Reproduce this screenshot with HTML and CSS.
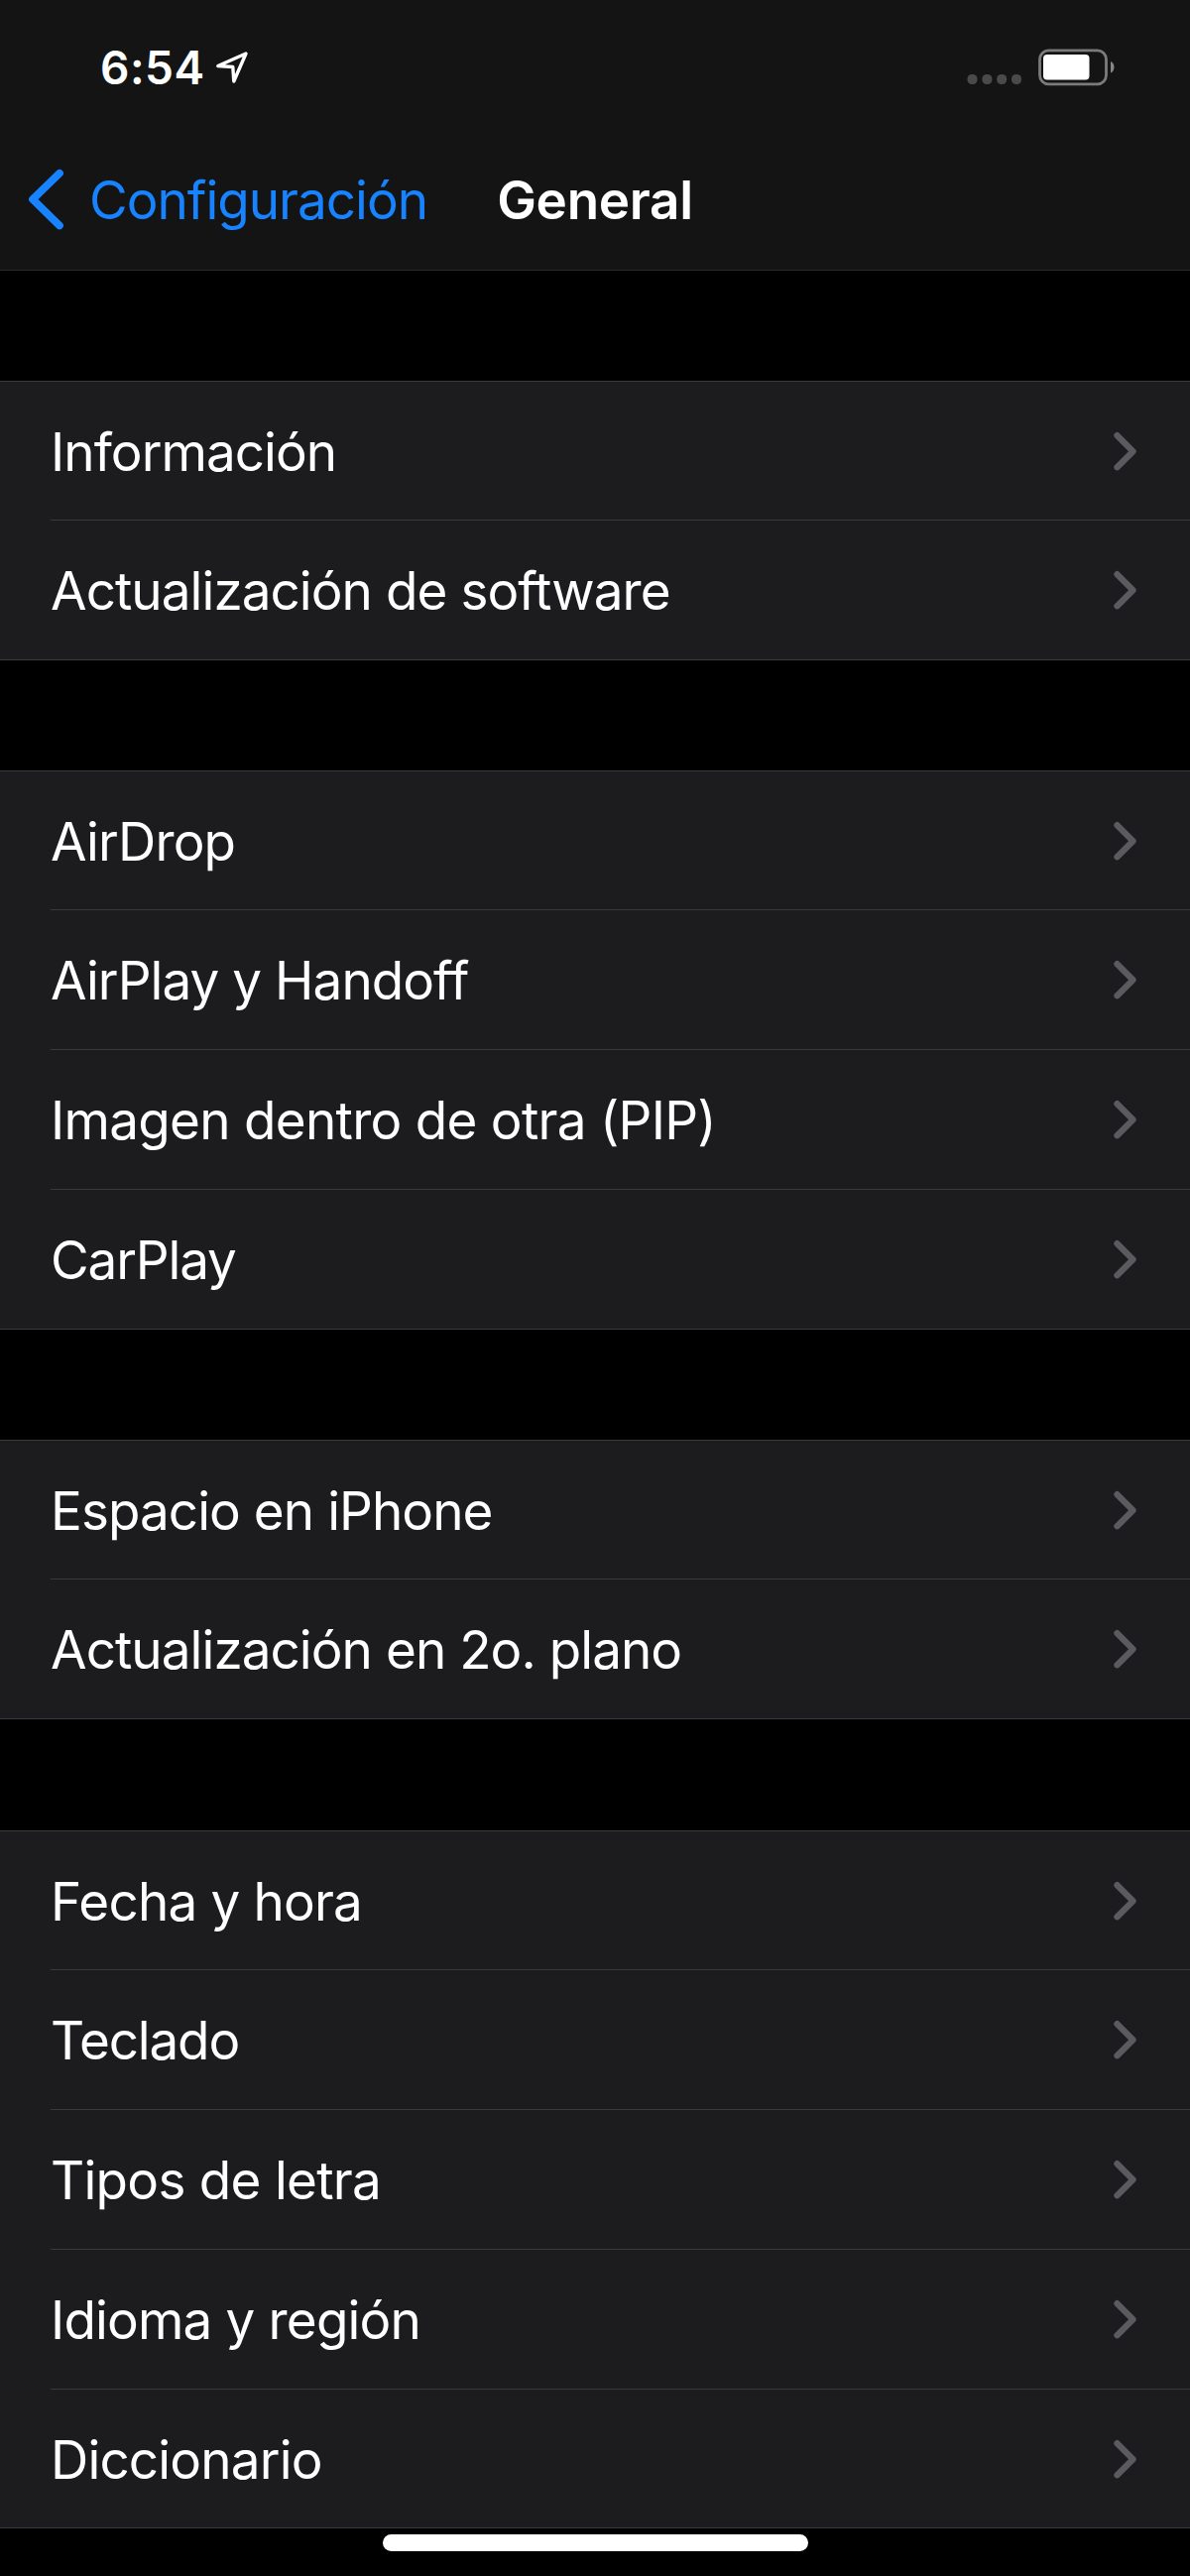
FILE: index.html
```
<!DOCTYPE html>
<html lang="es">
<head>
<meta charset="utf-8">
<title>General</title>
<link rel="stylesheet" href="styles.css">
</head>
<body>
<svg class="defs" aria-hidden="true"><symbol id="chevron" viewBox="0 0 24 40"><path d="M3.500 4.200 19.500 20.200 3.500 36.200"/></symbol></svg>
<header class="top">
  <div class="status">
    <span class="time">6:54</span>
    <svg class="location" viewBox="0 0 34 34"><path d="M31 3 2.8 15.5 17.8 16.5 18.8 31Z"/></svg>
    <svg class="signal" viewBox="0 0 56 12"><rect x="0.5" y="1" width="10" height="10" rx="4.5"/><rect x="15.4" y="1" width="10" height="10" rx="4.5"/><rect x="30.2" y="1" width="10" height="10" rx="4.5"/><rect x="45" y="1" width="10" height="10" rx="4.5"/></svg>
    <svg class="battery" viewBox="0 0 78 38"><rect class="shell" x="2.5" y="1.8" width="67" height="34" rx="9"/><rect class="charge" x="6" y="6" width="46.5" height="25.500" rx="4"/><path class="nub" d="M74 13C76 13.5 77.500 16 77.500 18.700S76 24 74 24.500Z"/></svg>
  </div>
  <nav class="nav">
    <a class="back"><svg class="back-icon" viewBox="0 0 36 62"><path d="M31 4.800 4 31 31 57.500"/></svg><span class="back-label">Configuración</span></a>
    <h1 class="title">General</h1>
  </nav>
</header>
<main>
  <ul class="group">
    <li class="row tight"><span>Información</span><svg class="chevron"><use href="#chevron"/></svg></li>
    <li class="row tight"><span>Actualización de software</span><svg class="chevron"><use href="#chevron"/></svg></li>
  </ul>
  <ul class="group">
    <li class="row"><span>AirDrop</span><svg class="chevron"><use href="#chevron"/></svg></li>
    <li class="row tight"><span>AirPlay y Handoff</span><svg class="chevron"><use href="#chevron"/></svg></li>
    <li class="row loose"><span>Imagen dentro de otra (PIP)</span><svg class="chevron"><use href="#chevron"/></svg></li>
    <li class="row tighter"><span>CarPlay</span><svg class="chevron"><use href="#chevron"/></svg></li>
  </ul>
  <ul class="group">
    <li class="row tight"><span>Espacio en iPhone</span><svg class="chevron"><use href="#chevron"/></svg></li>
    <li class="row tight"><span>Actualización en 2o. plano</span><svg class="chevron"><use href="#chevron"/></svg></li>
  </ul>
  <ul class="group last">
    <li class="row"><span>Fecha y hora</span><svg class="chevron"><use href="#chevron"/></svg></li>
    <li class="row tighter"><span>Teclado</span><svg class="chevron"><use href="#chevron"/></svg></li>
    <li class="row loose"><span>Tipos de letra</span><svg class="chevron"><use href="#chevron"/></svg></li>
    <li class="row"><span>Idioma y región</span><svg class="chevron"><use href="#chevron"/></svg></li>
    <li class="row"><span>Diccionario</span><svg class="chevron"><use href="#chevron"/></svg></li>
  </ul>
</main>
<div class="home"></div>
</body>
</html>
```
FILE: styles.css
```
* { box-sizing: border-box; }
body {
  margin: 0;
  background: #000;
  color: #fff;
  font-family: Inter, "Liberation Sans", sans-serif;
  font-size: 53px;
  font-variant-ligatures: none;
  min-height: 2598px;
}
svg { display: block; flex: none; }
.defs { width: 0; height: 0; position: absolute; }
.top {
  height: 273px;
  background: #141414;
  border-bottom: 1px solid #2a2a2b;
}
.status {
  height: 136px;
  padding: 0 76px 0 101px;
  display: flex;
  align-items: center;
}
.time { font-size: 46px; font-weight: 600; letter-spacing: 0.5px; }
.location { width: 34px; height: 34px; margin-left: 10px; }
.location path { fill: none; stroke: #fff; stroke-width: 3.400; stroke-linejoin: round; }
.signal { width: 56px; height: 12px; margin: 24px 15px 0 auto; fill: #4a4a4a; }
.battery { width: 78px; height: 38px; }
.shell { fill: none; stroke: #7b7b7b; stroke-width: 2.800; }
.charge { fill: #fff; }
.nub { fill: #868686; }
.nav {
  height: 130px;
  padding: 0 29px;
  display: grid;
  grid-template-columns: 1fr auto 1fr;
  align-items: center;
}
.back { display: flex; align-items: center; color: #1783ff; letter-spacing: -1px; }
.back-label { padding-top: 1px; }
.back-icon { width: 36px; height: 62px; margin-right: 25px; }
.back-icon path { fill: none; stroke: currentColor; stroke-width: 7.700; stroke-linecap: round; stroke-linejoin: round; }
.title { margin: 0; padding-top: 1px; font-size: 53px; font-weight: 600; letter-spacing: -0.3px; }
main { display: flex; flex-direction: column; gap: 111px; padding-top: 111px; }
.group {
  list-style: none;
  margin: 0;
  padding: 0 0 0 51px;
  background: #1c1c1e;
  border: solid #3a3a3c;
  border-width: 1px 0;
}
.last { margin-top: 1px; }
.row {
  height: 141px;
  padding-right: 53px;
  display: flex;
  align-items: center;
  justify-content: space-between;
  border-bottom: 1px solid #39393b;
  letter-spacing: -0.83px;
}
.row:first-child { height: 140px; }
.row:last-child { height: 140px; border-bottom: 0; }
.last .row:last-child { height: 139px; }
.row span { padding-top: 2px; }
.tight { letter-spacing: -0.94px; }
.tighter { letter-spacing: -1.15px; }
.loose { letter-spacing: -0.72px; }
.chevron { width: 24px; height: 40px; fill: none; stroke: #5b5b5f; stroke-width: 6.300; stroke-linecap: round; stroke-linejoin: round; }
.home { width: 429px; height: 17px; margin: 6px auto 0; border-radius: 9px; background: #fff; }
```
